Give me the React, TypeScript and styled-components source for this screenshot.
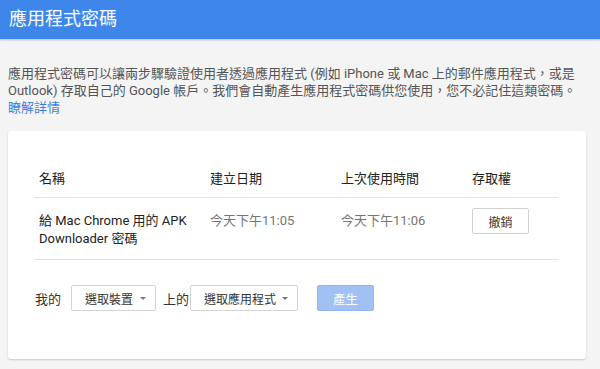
import React from 'react';
import styled, {createGlobalStyle} from 'styled-components';

const GlobalStyle = createGlobalStyle`
  html, body {
    margin: 0;
    padding: 0;
    background: #f4f4f4;
  }
  body {
    font-family: Roboto, "Noto Sans CJK TC", "Noto Sans", sans-serif;
    font-size: 13px;
    color: #222;
  }
`;

const Page = styled.div`
  width: 600px;
  height: 369px;
  overflow: hidden;
  background: #f4f4f4;
`;

const Header = styled.header`
  height: 39px;
  background: #3e86ea;
  box-shadow: 0 1px 2px rgba(0, 0, 0, 0.25);
  display: flex;
  align-items: center;
  padding: 0 9px;
  position: relative;
  z-index: 1;
`;

const Title = styled.h1`
  margin: 0;
  font-size: 18px;
  font-weight: 400;
  color: #fff;
  margin-top: -6px;
`;

const Main = styled.main`
  padding: 26px 14px 0 8px;
`;

const Intro = styled.p`
  margin: 0 0 15px;
  line-height: 17px;
  color: #555;
`;

const Link = styled.a`
  color: #3b7ee0;
  text-decoration: none;
`;

const Card = styled.section`
  background: #fff;
  border-radius: 3px;
  box-shadow: 0 1px 2px rgba(0, 0, 0, 0.18);
  padding: 27px 26px 49px;
  height: 228px;
  box-sizing: border-box;
`;

const Table = styled.table`
  width: 525px;
  table-layout: fixed;
  border-collapse: collapse;
`;

const Th = styled.th<{$w: number}>`
  text-align: left;
  font-weight: 400;
  color: #222;
  height: 39px;
  padding: 0 5px;
  border-bottom: 1px solid #e3e3e3;
  width: ${p => p.$w - 10}px;
`;

const Td = styled.td<{$muted?: boolean}>`
  vertical-align: top;
  padding: 14px 5px 11px;
  line-height: 18px;
  color: ${p => (p.$muted ? '#757575' : '#222')};
  border-bottom: 1px solid #e3e3e3;
`;

const RevokeButton = styled.button`
  margin-top: -4px;
  width: 57px;
  height: 26px;
  background: #fff;
  border: 1px solid #d0d0d0;
  border-radius: 2px;
  font-family: inherit;
  font-size: 12px;
  color: #333;
  padding: 0;
`;

const Controls = styled.div`
  display: flex;
  align-items: center;
  margin-top: 25px;
  padding-left: 1px;
  color: #333;
`;

const Label = styled.span<{$gap: number}>`
  margin-right: ${p => p.$gap}px;
`;

const Select = styled.div<{$w: number}>`
  width: ${p => p.$w}px;
  height: 26px;
  box-sizing: border-box;
  border: 1px solid #d3d3d3;
  border-radius: 2px;
  display: flex;
  align-items: center;
  justify-content: space-between;
  padding: 0 9px 0 13px;
  font-size: 12px;
  color: #333;
  margin-right: 7px;
`;

const Caret = styled.span`
  width: 0;
  height: 0;
  border-left: 3px solid transparent;
  border-right: 3px solid transparent;
  border-top: 3.5px solid #777;
`;

const CreateButton = styled.button`
  margin-left: 12px;
  width: 57px;
  height: 26px;
  background: #a1c0f3;
  border: 1px solid #93b6ef;
  border-radius: 2px;
  color: #fff;
  font-family: inherit;
  font-size: 12.5px;
  padding: 0;
`;

const App: React.FunctionComponent = () => {
  return (
    <Page>
      <GlobalStyle />
      <Header>
        <Title>應用程式密碼</Title>
      </Header>
      <Main>
        <Intro>
          應用程式密碼可以讓兩步驟驗證使用者透過應用程式 (例如 iPhone 或 Mac 上的郵件應用程式，或是 Outlook) 存取自己的 Google 帳戶。我們會自動產生應用程式密碼供您使用，您不必記住這類密碼。
          <br />
          <Link href="#">瞭解詳情</Link>
        </Intro>
        <Card>
          <Table>
            <thead>
              <tr>
                <Th $w={171}>名稱</Th>
                <Th $w={131}>建立日期</Th>
                <Th $w={131}>上次使用時間</Th>
                <Th $w={92}>存取權</Th>
              </tr>
            </thead>
            <tbody>
              <tr>
                <Td>給 Mac Chrome 用的 APK Downloader 密碼</Td>
                <Td $muted>今天下午11:05</Td>
                <Td $muted>今天下午11:06</Td>
                <Td>
                  <RevokeButton>撤銷</RevokeButton>
                </Td>
              </tr>
            </tbody>
          </Table>
          <Controls>
            <Label $gap={10}>我的</Label>
            <Select $w={85}>
              選取裝置
              <Caret />
            </Select>
            <Label $gap={1}>上的</Label>
            <Select $w={108}>
              選取應用程式
              <Caret />
            </Select>
            <CreateButton>產生</CreateButton>
          </Controls>
        </Card>
      </Main>
    </Page>
  );
};

export default App;
